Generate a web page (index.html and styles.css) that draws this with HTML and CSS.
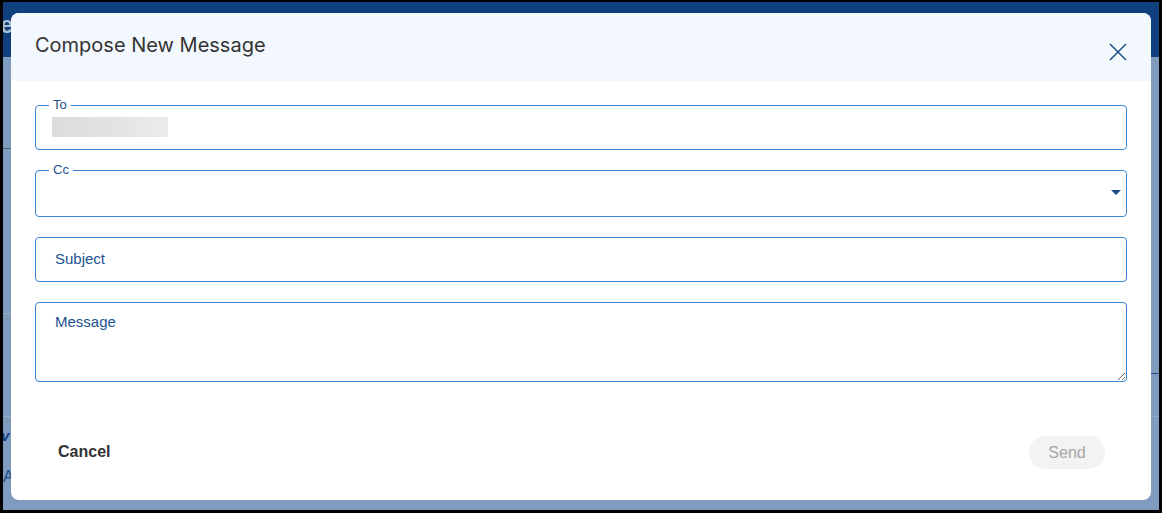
FILE: index.html
```html
<!DOCTYPE html>
<html lang="en">
<head>
<meta charset="utf-8">
<title>Compose New Message</title>
<link rel="stylesheet" href="styles.css">
</head>
<body>
<div class="frame">
  <div class="backdrop">
    <span class="ghost ghost-e">e</span>
    <span class="ghost ghost-v">v</span>
    <span class="ghost ghost-a">A</span>
    <span class="rule rule-l1"></span>
    <span class="rule rule-l2"></span>
    <span class="rule rule-l3"></span>
    <span class="rule rule-r1"></span>
    <span class="rule rule-r2"></span>

    <div class="modal" role="dialog" aria-labelledby="dlg-title">
      <div class="modal-header">
        <h2 class="modal-title" id="dlg-title">Compose New Message</h2>
        <button class="close-btn" type="button" aria-label="Close">
          <svg width="18" height="18" viewBox="0 0 18 18" aria-hidden="true">
            <path d="M1 1 L17 17 M17 1 L1 17" stroke="#1d4d88" stroke-width="1.5" fill="none"/>
          </svg>
        </button>
      </div>

      <div class="modal-body">
        <div class="field field-to">
          <span class="legend">To</span>
          <span class="skeleton"></span>
        </div>
        <div class="field field-cc">
          <span class="legend">Cc</span>
          <span class="caret"></span>
        </div>
        <input class="field field-input" type="text" placeholder="Subject">
        <textarea class="field field-textarea" placeholder="Message"></textarea>
      </div>

      <div class="modal-footer">
        <button class="btn-cancel" type="button">Cancel</button>
        <button class="btn-send" type="button" disabled>Send</button>
      </div>
    </div>
  </div>
</div>
</body>
</html>
```

FILE: styles.css
```css
* { box-sizing: border-box; }

html, body {
  margin: 0;
  padding: 0;
  background: #000;
}

body {
  font-family: "Liberation Sans", Arial, sans-serif;
}

.frame {
  width: 1162px;
  height: 513px;
  padding: 2px 3px 3px 3px;
}

.backdrop {
  position: relative;
  width: 1156px;
  height: 508px;
  padding: 11px 8px;
  overflow: hidden;
  background: linear-gradient(#10407e 0, #10407e 55px, #7f9cbf 55px, #7f9cbf 100%);
}

.ghost {
  position: absolute;
  font-family: "Liberation Sans", Arial, sans-serif;
  font-weight: bold;
}
.ghost-e {
  left: -3px;
  top: 9px;
  font-size: 24px;
  color: #aebfd4;
}
.ghost-v {
  left: -2px;
  top: 425px;
  font-size: 15px;
  font-style: italic;
  color: #123f80;
}
.ghost-a {
  left: 0;
  top: 466px;
  font-size: 16px;
  font-weight: normal;
  color: #1a4a8a;
}

.rule {
  position: absolute;
  height: 1px;
}
.rule-l1 { left: 0; width: 10px; top: 146px; background: #4d6789; }
.rule-l2 { left: 0; width: 10px; top: 311px; background: #95abc8; }
.rule-l3 { left: 0; width: 10px; top: 414px; background: #95abc8; }
.rule-r1 { right: 0; width: 10px; top: 371px; background: #1e4d8a; }
.rule-r2 { right: 0; width: 10px; top: 414px; background: #95abc8; }

.modal {
  position: relative;
  width: 1140px;
  height: 487px;
  background: #fff;
  border-radius: 8px;
  overflow: hidden;
  display: flex;
  flex-direction: column;
}

.modal-header {
  height: 68px;
  flex: none;
  background: #f3f8fe;
  display: flex;
  justify-content: space-between;
  align-items: flex-start;
  padding: 20px 24px 0 24px;
}

.modal-title {
  margin: 0;
  font-family: Inter, "Liberation Sans", sans-serif;
  font-weight: 400;
  font-size: 20px;
  line-height: 24px;
  color: #333;
}

.close-btn {
  margin: 10px 0 0 0;
  padding: 0;
  width: 18px;
  height: 18px;
  border: 0;
  background: none;
  display: block;
  cursor: pointer;
}
.close-btn svg { display: block; }

.modal-body {
  padding: 24px 24px 0 24px;
  display: flex;
  flex-direction: column;
  gap: 20px;
}

.field {
  display: block;
  position: relative;
  width: 100%;
  border: 1px solid #3a84d6;
  border-radius: 4px;
  background: #fff;
  margin: 0;
  font-family: "Liberation Sans", Arial, sans-serif;
}

.legend {
  position: absolute;
  left: 13px;
  top: -8px;
  padding: 0 4px;
  background: #fff;
  font-size: 13px;
  line-height: 14px;
  color: #24508a;
}

.field-to {
  height: 45px;
  padding: 11px 0 0 16px;
}

.skeleton {
  display: block;
  width: 116px;
  height: 20px;
  background: linear-gradient(90deg, #dcdcdc 0%, #e2e2e2 50%, #ececec 100%);
}

.field-cc {
  height: 47px;
}

.caret {
  position: absolute;
  right: 5px;
  top: 19px;
  width: 0;
  height: 0;
  border-left: 5px solid transparent;
  border-right: 5px solid transparent;
  border-top: 5px solid #1d4d88;
}

.field-input {
  height: 45px;
  padding: 0 19px 3px 19px;
  font-size: 15px;
  color: #1f4d88;
  outline: none;
}

.field-textarea {
  height: 80px;
  padding: 10px 19px;
  font-size: 15px;
  line-height: 17px;
  color: #1f4d88;
  resize: vertical;
  outline: none;
}

.field-input::placeholder,
.field-textarea::placeholder {
  color: #22518d;
  opacity: 1;
}

.modal-footer {
  margin-top: auto;
  padding: 0 46px 31px 47px;
  display: flex;
  justify-content: space-between;
  align-items: center;
}

.btn-cancel {
  border: 0;
  background: none;
  padding: 0 0 2px 0;
  font-family: "Liberation Sans", Arial, sans-serif;
  font-weight: bold;
  font-size: 16px;
  color: #333;
  cursor: pointer;
}

.btn-send {
  width: 76px;
  height: 33px;
  border: 0;
  border-radius: 17px;
  background: #f3f3f3;
  color: #a6a6a6;
  font-family: "Liberation Sans", Arial, sans-serif;
  font-size: 16px;
  padding: 0;
}
```
